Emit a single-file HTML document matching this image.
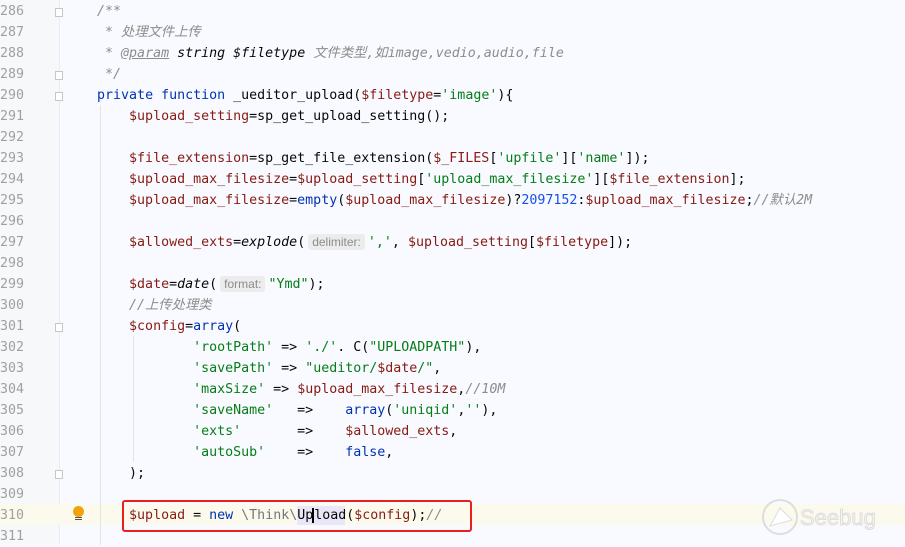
<!DOCTYPE html>
<html><head><meta charset="utf-8"><style>
body{margin:0;width:905px;height:544px;overflow:hidden;background:#f8faff;position:relative;font-family:"DejaVu Sans Mono","Noto Sans CJK SC",monospace;font-size:13.3px}
#gut{position:absolute;left:0;top:0;width:59px;height:544px;background:#f7f8fa;border-right:1px solid #ebecf0}
#w{position:absolute;left:0;top:1px;width:905px;height:544px}
.n{position:absolute;left:0;width:23px;text-align:right;color:#a0a0a0;height:21px;line-height:21px}
.l{position:absolute;left:65px;height:21px;line-height:21px;white-space:pre;color:#080808}
.v{color:#871b12}.s{color:#067d17}.k{color:#0033b3}.c{color:#8c8c8c;font-style:italic}.num{color:#1750eb}
.h{font-family:"Liberation Sans",sans-serif;font-size:12px;color:#8c8c8c;background:#ececec;border-radius:3px;padding:1px 4px;margin:0 3px}
.f{position:absolute;left:55px;width:8px;height:9px;border:1px solid #c8c8c8;background:#fff;box-sizing:border-box}
.g{position:absolute;width:1px;background:#e4e4e4}
</style></head><body>
<div id="gut"></div>
<div style="position:absolute;left:0;top:504px;width:905px;height:21px;background:#fcfaed"></div>
<div class="g" style="left:100px;top:105px;height:440px"></div>
<div class="g" style="left:133px;top:336px;height:126px"></div>
<div id="w">
<div class="n" style="top:0">286</div><div class="n" style="top:21px">287</div><div class="n" style="top:42px">288</div><div class="n" style="top:63px">289</div><div class="n" style="top:84px">290</div><div class="n" style="top:105px">291</div><div class="n" style="top:126px">292</div><div class="n" style="top:147px">293</div><div class="n" style="top:168px">294</div><div class="n" style="top:189px">295</div><div class="n" style="top:210px">296</div><div class="n" style="top:231px">297</div><div class="n" style="top:252px">298</div><div class="n" style="top:273px">299</div><div class="n" style="top:294px">300</div><div class="n" style="top:315px">301</div><div class="n" style="top:336px">302</div><div class="n" style="top:357px">303</div><div class="n" style="top:378px">304</div><div class="n" style="top:399px">305</div><div class="n" style="top:420px">306</div><div class="n" style="top:441px">307</div><div class="n" style="top:462px">308</div><div class="n" style="top:483px">309</div><div class="n" style="top:504px">310</div><div class="n" style="top:525px">311</div>
<div class="f" style="top:7px"></div><div class="f" style="top:70px"></div><div class="f" style="top:91px"></div><div class="f" style="top:322px"></div><div class="f" style="top:469px"></div>
<div class="l c" style="top:0">    /**</div>
<div class="l c" style="top:21px">     * 处理文件上传</div>
<div class="l" style="top:42px"><span class="c">     * <u>@param</u> </span><i>string $filetype</i> <span class="c">文件类型,如image,vedio,audio,file</span></div>
<div class="l c" style="top:63px">     */</div>
<div class="l" style="top:84px">    <span class="k">private function</span> _ueditor_upload(<span class="v">$filetype</span>=<span class="s">'image'</span>){</div>
<div class="l" style="top:105px">        <span class="v">$upload_setting</span>=sp_get_upload_setting();</div>
<div class="l" style="top:147px">        <span class="v">$file_extension</span>=sp_get_file_extension(<span class="v">$_FILES</span>[<span class="s">'upfile'</span>][<span class="s">'name'</span>]);</div>
<div class="l" style="top:168px">        <span class="v">$upload_max_filesize</span>=<span class="v">$upload_setting</span>[<span class="s">'upload_max_filesize'</span>][<span class="v">$file_extension</span>];</div>
<div class="l" style="top:189px">        <span class="v">$upload_max_filesize</span>=<span class="k">empty</span>(<span class="v">$upload_max_filesize</span>)?<span class="num">2097152</span>:<span class="v">$upload_max_filesize</span>;<span class="c">//默认2M</span></div>
<div class="l" style="top:231px">        <span class="v">$allowed_exts</span>=<i>explode</i>(<span class="h">delimiter:</span><span class="s">','</span>, <span class="v">$upload_setting</span>[<span class="v">$filetype</span>]);</div>
<div class="l" style="top:273px">        <span class="v">$date</span>=<i>date</i>(<span class="h">format:</span><span class="s">"Ymd"</span>);</div>
<div class="l c" style="top:294px">        //上传处理类</div>
<div class="l" style="top:315px">        <span class="v">$config</span>=<span class="k">array</span>(</div>
<div class="l" style="top:336px">                <span class="s">'rootPath'</span> =&gt; <span class="s">'./'</span>. C(<span class="s">"UPLOADPATH"</span>),</div>
<div class="l" style="top:357px">                <span class="s">'savePath'</span> =&gt; <span class="s">"ueditor/</span><span class="v">$date</span><span class="s">/"</span>,</div>
<div class="l" style="top:378px">                <span class="s">'maxSize'</span> =&gt; <span class="v">$upload_max_filesize</span>,<span class="c">//10M</span></div>
<div class="l" style="top:399px">                <span class="s">'saveName'</span>   =&gt;    <span class="k">array</span>(<span class="s">'uniqid'</span>,<span class="s">''</span>),</div>
<div class="l" style="top:420px">                <span class="s">'exts'</span>       =&gt;    <span class="v">$allowed_exts</span>,</div>
<div class="l" style="top:441px">                <span class="s">'autoSub'</span>    =&gt;    <span class="k">false</span>,</div>
<div class="l" style="top:462px">        );</div>
<div style="position:absolute;left:297px;top:505px;width:48px;height:19px;background:#e9e6f8"></div>
<div class="l" style="top:504px">        <span class="v">$upload</span> = <span class="k">new</span> <span style="color:#777">\Think\</span>Up<span style="border-left:2px solid #000;margin-left:-1px"></span>load(<span class="v">$config</span>);<span class="c">//</span></div>
</div>
<div style="position:absolute;left:122px;top:500px;width:350px;height:32px;border:2px solid #e8201c;border-radius:3px;box-sizing:border-box"></div>
<div style="position:absolute;left:73px;top:506px;width:11px;height:11px;border-radius:50%;background:#f0a30a"></div>
<div style="position:absolute;left:75px;top:517px;width:7px;height:1px;background:#555;box-shadow:0 2px 0 #555"></div>
<svg style="position:absolute;left:758px;top:496px" width="130" height="44"><circle cx="22" cy="21" r="17" fill="none" stroke="#ddd" stroke-width="2"/><path d="M12 30 L22 12 L34 24 Z" fill="#fff" stroke="#ddd"/><text x="42" y="29" font-family="Liberation Sans,sans-serif" font-size="22" fill="#f4f4f4" stroke="#d8d8d8" stroke-width="0.8">Seebug</text></svg>
</body></html>
